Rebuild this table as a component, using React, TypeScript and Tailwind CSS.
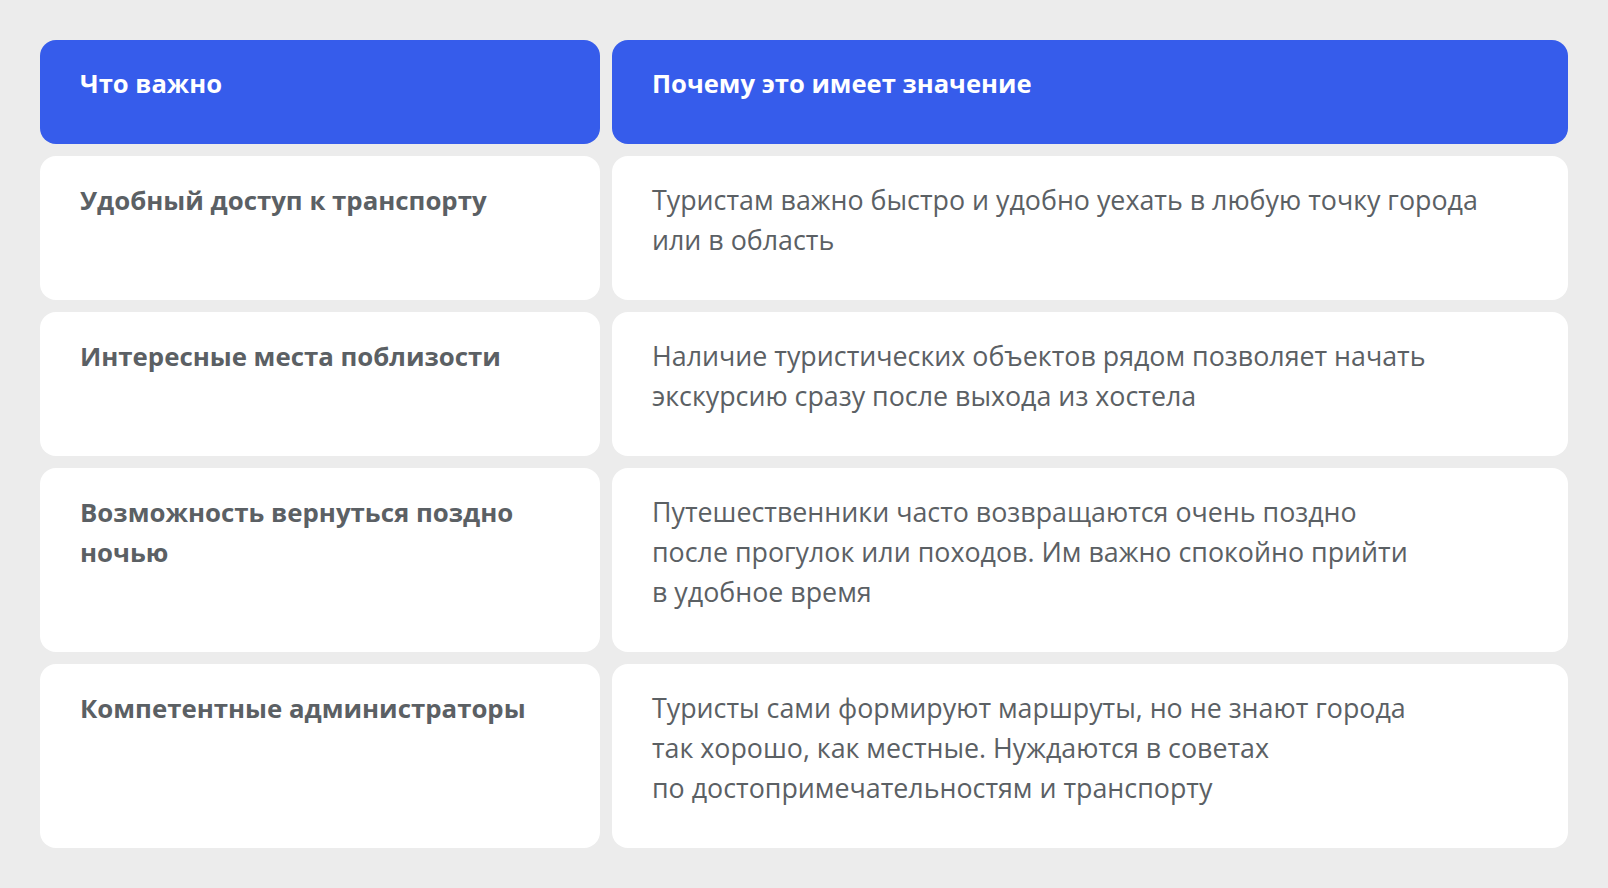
import React from 'react';

interface Row {
  title:  string[];
  reason: string[];
}

const ROWS: Row[] = [
  {
    title:  ['Удобный доступ к транспорту'],
    reason: ['Туристам важно быстро и удобно уехать в любую точку города', 'или в область'],
  },
  {
    title:  ['Интересные места поблизости'],
    reason: ['Наличие туристических объектов рядом позволяет начать', 'экскурсию сразу после выхода из хостела'],
  },
  {
    title:  ['Возможность вернуться поздно', 'ночью'],
    reason: [
      'Путешественники часто возвращаются очень поздно',
      'после прогулок или походов. Им важно спокойно прийти',
      'в удобное время',
    ],
  },
  {
    title:  ['Компетентные администраторы'],
    reason: [
      'Туристы сами формируют маршруты, но не знают города',
      'так хорошо, как местные. Нуждаются в советах',
      'по достопримечательностям и транспорту',
    ],
  },
];

function Lines({ lines }: { lines: string[] }) {
  return (
    <>
      {lines.map((l, i) => (
        <span key={i} className="block whitespace-nowrap">{l}</span>
      ))}
    </>
  );
}

export default function App() {
  return (
    <div
      className="min-h-screen w-full bg-[#ececec] p-10"
      style={{ fontFamily: '"Open Sans", "Noto Sans", sans-serif' }}
    >
      <div className="grid grid-cols-[560px_1fr] gap-3 leading-[40px]">
        {/* Header */}
        <div className="rounded-2xl bg-[#365ceb] px-10 pt-6 pb-10 text-[25.6px] font-bold text-white">Что важно</div>
        <div className="rounded-2xl bg-[#365ceb] px-10 pt-6 pb-10 text-[25.6px] font-bold text-white">Почему это имеет значение</div>

        {ROWS.map((r, i) => (
          <React.Fragment key={i}>
            <div className="rounded-2xl bg-white px-10 pt-6 pb-10 text-[25.8px] font-bold text-[#5b6064]">
              <Lines lines={r.title} />
            </div>
            <div className="rounded-2xl bg-white px-10 pt-6 pb-10 text-[26.8px] text-[#5b6064]">
              <Lines lines={r.reason} />
            </div>
          </React.Fragment>
        ))}
      </div>
    </div>
  );
}
